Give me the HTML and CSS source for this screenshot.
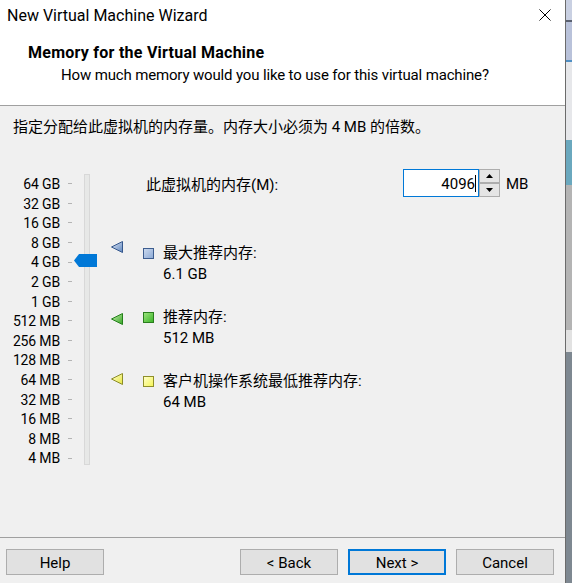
FILE: index.html
```html
<!DOCTYPE html>
<html lang="zh">
<head>
<meta charset="utf-8">
<title>New Virtual Machine Wizard</title>
<link rel="stylesheet" href="styles.css">
</head>
<body>
<div class="screen">
  <div class="dialog">
    <div class="titlebar">
      <span class="title">New Virtual Machine Wizard</span>
      <svg class="close" width="12" height="12" viewBox="0 0 12 12"><path d="M0.5 0.5 L11.5 11.5 M11.5 0.5 L0.5 11.5" stroke="#000" stroke-width="1" fill="none"/></svg>
    </div>
    <div class="header">
      <div class="h-title">Memory for the Virtual Machine</div>
      <div class="h-sub">How much memory would you like to use for this virtual machine?</div>
    </div>
    <div class="body">
      <div class="intro">指定分配给此虚拟机的内存量。内存大小必须为 4 MB 的倍数。</div>
      <div class="content">
        <div class="slider">
          <div class="scale">
            <div class="row"><span class="lbl">64 GB</span><span class="tick"></span></div>
            <div class="row"><span class="lbl">32 GB</span><span class="tick"></span></div>
            <div class="row"><span class="lbl">16 GB</span><span class="tick"></span></div>
            <div class="row"><span class="lbl">8 GB</span><span class="tick"></span></div>
            <div class="row"><span class="lbl">4 GB</span><span class="tick"></span></div>
            <div class="row"><span class="lbl">2 GB</span><span class="tick"></span></div>
            <div class="row"><span class="lbl">1 GB</span><span class="tick"></span></div>
            <div class="row"><span class="lbl">512 MB</span><span class="tick"></span></div>
            <div class="row"><span class="lbl">256 MB</span><span class="tick"></span></div>
            <div class="row"><span class="lbl">128 MB</span><span class="tick"></span></div>
            <div class="row"><span class="lbl">64 MB</span><span class="tick"></span></div>
            <div class="row"><span class="lbl">32 MB</span><span class="tick"></span></div>
            <div class="row"><span class="lbl">16 MB</span><span class="tick"></span></div>
            <div class="row"><span class="lbl">8 MB</span><span class="tick"></span></div>
            <div class="row"><span class="lbl">4 MB</span><span class="tick"></span></div>
          </div>
          <div class="track"></div>
          <svg class="thumb" width="23" height="13" viewBox="0 0 23 13"><polygon points="0,6.5 5,0 23,0 23,13 5,13" fill="#0078d7"/></svg>
          <svg class="marker" style="top:68px" width="12" height="12" viewBox="0 0 12 12">
            <defs><linearGradient id="gb" x1="0" y1="0" x2="1" y2="1"><stop offset="0" stop-color="#dfe8f5"/><stop offset="1" stop-color="#5f86be"/></linearGradient></defs>
            <polygon points="0.5,6 11.5,0.5 11.5,11.5" fill="url(#gb)" stroke="#34578c" stroke-width="1"/>
          </svg>
          <svg class="marker" style="top:140px" width="12" height="12" viewBox="0 0 12 12">
            <defs><linearGradient id="gg" x1="0" y1="0" x2="1" y2="1"><stop offset="0" stop-color="#c8f0b0"/><stop offset="1" stop-color="#35a524"/></linearGradient></defs>
            <polygon points="0.5,6 11.5,0.5 11.5,11.5" fill="url(#gg)" stroke="#23801a" stroke-width="1"/>
          </svg>
          <svg class="marker" style="top:200px" width="12" height="12" viewBox="0 0 12 12">
            <defs><linearGradient id="gy" x1="0" y1="0" x2="1" y2="1"><stop offset="0" stop-color="#ffffd0"/><stop offset="1" stop-color="#e6e640"/></linearGradient></defs>
            <polygon points="0.5,6 11.5,0.5 11.5,11.5" fill="url(#gy)" stroke="#8c8c28" stroke-width="1"/>
          </svg>
        </div>
        <div class="details">
          <div class="mem-row">
            <span class="mem-label">此虚拟机的内存(M):</span>
            <div class="input"><span class="val">4096</span><span class="caret"></span></div>
            <div class="spin">
              <div class="spin-btn"><svg width="7" height="4" viewBox="0 0 7 4"><polygon points="0,4 3.5,0 7,4" fill="#000"/></svg></div>
              <div class="spin-btn"><svg width="7" height="4" viewBox="0 0 7 4"><polygon points="0,0 7,0 3.5,4" fill="#000"/></svg></div>
            </div>
            <span class="unit">MB</span>
          </div>
          <div class="info">
            <div class="item item-max">
              <span class="sq sq-blue"></span>
              <div class="txt"><div>最大推荐内存:</div><div class="num">6.1 GB</div></div>
            </div>
            <div class="item item-rec">
              <span class="sq sq-green"></span>
              <div class="txt"><div>推荐内存:</div><div class="num">512 MB</div></div>
            </div>
            <div class="item item-min">
              <span class="sq sq-yellow"></span>
              <div class="txt"><div>客户机操作系统最低推荐内存:</div><div class="num">64 MB</div></div>
            </div>
          </div>
        </div>
      </div>
    </div>
    <div class="footer">
      <button class="btn">Help</button>
      <div class="spacer"></div>
      <button class="btn">&lt; Back</button>
      <button class="btn btn-default">Next &gt;</button>
      <button class="btn">Cancel</button>
    </div>
  </div>
  <div class="desk"></div>
</div>
</body>
</html>
```

FILE: styles.css
```css
* { box-sizing: border-box; }
html, body { margin: 0; padding: 0; }
body {
  font-family: Roboto, "Noto Sans CJK SC", sans-serif;
  font-size: 15px;
  color: #000;
  background: #f0f0f0;
}
.screen {
  display: flex;
  width: 572px;
  height: 583px;
  overflow: hidden;
}
.dialog {
  width: 566px;
  height: 583px;
  border-right: 1px solid #6b6b6b;
  background: #f0f0f0;
  display: flex;
  flex-direction: column;
}
.desk {
  flex: 1;
  background: linear-gradient(to bottom,
    #c9d0e2 0px, #c9d0e2 20px,
    #5a6070 20px, #5a6070 22px,
    #b9c2da 22px, #b9c2da 60px,
    #4f8fc4 60px, #4f8fc4 62px,
    #e6e7ea 62px, #e6e7ea 140px,
    #6aa8be 140px, #6aa8be 185px,
    #b4b4b4 185px, #b4b4b4 330px,
    #e2e2e2 330px, #e2e2e2 352px,
    #7e8891 352px, #7e8891 583px);
}
.titlebar {
  height: 30px;
  background: #fff;
  display: flex;
  align-items: center;
  padding-left: 7px;
  padding-right: 14px;
}
.title {
  flex: 1;
  font-size: 16px;
  line-height: 30px;
  padding-top: 1px;
}
.close { display: block; margin-top: -1px; }
.header {
  background: #fff;
  height: 76px;
  padding-top: 13px;
  border-bottom: 1px solid #a0a0a0;
}
.h-title {
  font-weight: bold;
  font-size: 16px;
  letter-spacing: 0.25px;
  line-height: 20px;
  padding-left: 28px;
}
.h-sub {
  line-height: 20px;
  margin-top: 2px;
  padding-left: 61px;
  letter-spacing: -0.15px;
}
.body {
  flex: 1;
  padding-top: 11px;
}
.intro {
  line-height: 20px;
  padding-left: 13px;
}
.content {
  display: flex;
  align-items: flex-start;
  margin-top: 32px;
}
.slider {
  position: relative;
  display: flex;
  margin-top: 4px;
  width: 143px;
}
.scale {
  width: 84px;
  padding-top: 2px;
}
.row {
  display: flex;
  align-items: center;
  height: 19.6px;
}
.lbl {
  width: 60px;
  text-align: right;
  font-size: 14px;
  line-height: 19.6px;
  white-space: nowrap;
  letter-spacing: -0.15px;
}
.tick {
  width: 4px;
  height: 1px;
  margin-left: 8px;
  margin-top: -2px;
  background: #b4b4b4;
}
.track {
  width: 6px;
  height: 291px;
  margin-top: 1px;
  background: #e7e8e7;
  border: 1px solid #d8d8d8;
}
.thumb {
  position: absolute;
  left: 74px;
  top: 81px;
}
.marker {
  position: absolute;
  left: 111px;
}
.details {
  flex: 1;
}
.mem-row {
  display: flex;
  align-items: center;
  height: 28px;
}
.mem-label {
  width: 260px;
  padding-left: 3px;
  padding-top: 1px;
  white-space: nowrap;
}
.input {
  width: 76px;
  height: 28px;
  border: 1px solid #0078d7;
  background: #fff;
  display: flex;
  align-items: center;
  justify-content: flex-end;
  padding-right: 2px;
}
.val { line-height: 20px; padding-top: 1px; }
.caret {
  width: 1px;
  height: 17px;
  background: #000;
}
.spin {
  width: 21px;
  height: 28px;
  display: flex;
  flex-direction: column;
  justify-content: space-between;
}
.spin-btn {
  height: 14px;
  border: 1px solid #adadad;
  background: #e5e5e5;
  display: flex;
  align-items: center;
  justify-content: center;
}
.unit {
  margin-left: 6px;
  padding-top: 1px;
}
.info {
  display: flex;
  flex-direction: column;
  gap: 23px;
  margin-top: 46px;
}
.item {
  display: flex;
  align-items: flex-start;
}
.txt {
  line-height: 20px;
  margin-left: 9px;
}
.num { padding-top: 1px; }
.sq {
  width: 11px;
  height: 11px;
  margin-top: 5px;
  border: 1px solid;
}
.sq-blue {
  border-color: #3d5d8f;
  background: linear-gradient(135deg, #cbd9ee, #8eabd6);
}
.sq-green {
  border-color: #2a7d1e;
  background: linear-gradient(135deg, #9be37c, #3db52a);
}
.sq-yellow {
  border-color: #8f8f2a;
  background: linear-gradient(135deg, #ffffc8, #f5f55a);
}
.footer {
  height: 46px;
  border-top: 1px solid #a0a0a0;
  display: flex;
  align-items: flex-start;
  padding: 11px 11px 0 6px;
  gap: 10px;
}
.spacer { flex: 1; }
.btn {
  width: 98px;
  height: 26px;
  background: #e1e1e1;
  border: 1px solid #adadad;
  font-family: Roboto, "Noto Sans CJK SC", sans-serif;
  font-size: 15px;
  color: #000;
  padding: 1px 0 0;
  line-height: 22px;
}
.btn-default {
  border: 2px solid #0078d7;
}
```
